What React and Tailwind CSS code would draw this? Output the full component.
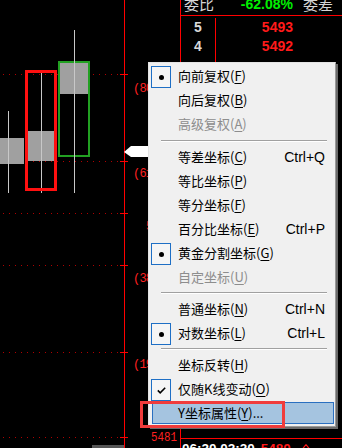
import React from "react";

const GRID = [74, 161, 213, 265, 352, 437];

function Chart() {
  return (
    <svg width="180" height="448" viewBox="0 0 180 448" className="block">
      {GRID.map((y) => (
        <g key={y}>
          <line x1="3" x2="122" y1={y + 0.5} y2={y + 0.5} stroke="#b00000" strokeDasharray="1 5" />
          <line x1="120" x2="128" y1={y + 0.5} y2={y + 0.5} stroke="#ff0000" />
        </g>
      ))}
      <line x1="124.5" x2="124.5" y1="0" y2="448" stroke="#ff0000" />

      {/* left candle */}
      <rect x="0" y="138" width="24" height="26" fill="#a0a0a0" />
      <line x1="8.5" x2="8.5" y1="111" y2="193" stroke="#c8c8c8" />

      {/* middle candle */}
      <rect x="26" y="131" width="31" height="30" fill="#a0a0a0" />
      <line x1="41.5" x2="41.5" y1="71" y2="193" stroke="#c8c8c8" />
      <rect x="26.5" y="71.5" width="29" height="118" fill="none" stroke="#ff1010" strokeWidth="3" />

      {/* right candle */}
      <rect x="58" y="61" width="32" height="33" fill="#a0a0a0" />
      <rect x="59" y="62" width="30" height="94" fill="none" stroke="#22a022" strokeWidth="2" />
      <line x1="74.5" x2="74.5" y1="30" y2="193" stroke="#c8c8c8" />

      <rect x="92" y="445" width="32" height="3" fill="#555555" />

      <g fill="#ff2020" fontFamily="'Liberation Mono', monospace" fontSize="12" letterSpacing="-0.8">
        <text x="133" y="91.5">(80.9%)</text>
        <text x="133" y="177">(61.8%)</text>
        <text x="146" y="230">5490</text>
        <text x="133" y="282">(38.2%)</text>
        <text x="133" y="368">(19.1%)</text>
        <text x="151" y="441" fontSize="13" textLength="26" lengthAdjust="spacingAndGlyphs" letterSpacing="0">5481</text>
      </g>

      <polygon points="124,152 131,146 150,146 150,157 131,157" fill="#ffffff" />
    </svg>
  );
}

const ITEMS = [
  { t: "向前复权", k: "F", check: "dot" },
  { t: "向后复权", k: "B" },
  { t: "高级复权", k: "A", disabled: true },
  { sep: 9 },
  { t: "等差坐标", k: "C", sc: "Ctrl+Q" },
  { t: "等比坐标", k: "P" },
  { t: "等分坐标", k: "F" },
  { t: "百分比坐标", k: "E", sc: "Ctrl+P" },
  { t: "黄金分割坐标", k: "G", check: "dot" },
  { t: "自定坐标", k: "U", disabled: true },
  { sep: 8 },
  { t: "普通坐标", k: "N", sc: "Ctrl+N" },
  { t: "对数坐标", k: "L", sc: "Ctrl+L", check: "dot" },
  { sep: 8 },
  { t: "坐标反转", k: "H" },
  { t: "仅随K线变动", k: "O", check: "tick" },
  { t: "Y坐标属性", k: "Y", suffix: "...", active: true },
];

function CheckBox({ kind }) {
  return (
    <div className="-ml-[2px] mt-[2px] w-[20px] h-[22px] shrink-0 border border-[#1e6fc5] bg-[#f5f5f5] flex items-center justify-center">
      {kind === "dot" ? (
        <div className="w-[5px] h-[5px] rounded-full bg-black" />
      ) : (
        <svg width="9" height="7" viewBox="0 0 9 7">
          <path d="M0.8 3.4 L3.2 5.8 L8.2 0.8" fill="none" stroke="#000" strokeWidth="1.6" />
        </svg>
      )}
    </div>
  );
}

function Menu() {
  return (
    <div className="absolute left-[148px] top-[62px] w-[188px] bg-[#f0f0f0] border border-t-[#e4e4e4] border-l-[#e4e4e4] border-r-[#9a9a9a] border-b-[#9a9a9a] shadow-[2px_2px_0_0_#6a6a6a] py-[1px] font-['Noto_Sans_CJK_SC',sans-serif] text-[13px] leading-[16px]">
      {ITEMS.map((it, i) => {
        if (it.sep) {
          return (
            <div key={i} className={it.sep === 9 ? "h-[9px] flex flex-col justify-center pl-[12px] pr-[8px]" : "h-[8px] flex flex-col justify-center pl-[12px] pr-[8px]"}>
              <div className="h-[1px] bg-[#a0a0a0]" />
              <div className="h-[1px] bg-[#ffffff]" />
            </div>
          );
        }
        return (
          <div key={i} className="h-[24px] py-[1px] pl-[3px] pr-[1px]">
            <div
              className={
                it.active
                  ? "h-full flex items-center border border-[#2a6fc0] bg-[#a5c4e0] text-black"
                  : it.disabled
                  ? "h-full flex items-center border border-transparent text-[#8d8d8d]"
                  : "h-full flex items-center border border-transparent text-black"
              }
            >
              {it.check ? <CheckBox kind={it.check} /> : <div className="-ml-[2px] w-[20px] shrink-0" />}
              <span className="ml-[7px] whitespace-nowrap">
                {it.t}(<span className="underline underline-offset-2">{it.k}</span>){it.suffix || ""}
              </span>
              {it.sc ? (
                <span className="ml-auto mr-[8px] font-['Liberation_Sans',sans-serif] text-[14px] whitespace-nowrap">{it.sc}</span>
              ) : null}
            </div>
          </div>
        );
      })}
    </div>
  );
}

function RightPanel() {
  return (
    <div className="flex-1 h-full flex flex-col border-l border-[#ff0000]">
      <div className="h-[16px] border-b border-[#ff0000] flex overflow-hidden">
        <div className="w-[35px] shrink-0 pl-[3px] -mt-[4px] font-['Noto_Sans_CJK_SC',sans-serif] text-[15px] leading-[15px] text-[#d4d4d4] whitespace-nowrap">委比</div>
        <div className="w-[77px] shrink-0 text-right -mt-[3px] font-['Liberation_Sans',sans-serif] font-bold text-[14px] leading-[15px] text-[#00f000]">-62.08%</div>
        <div className="ml-[10px] -mt-[4px] font-['Noto_Sans_CJK_SC',sans-serif] text-[15px] leading-[15px] text-[#d4d4d4] whitespace-nowrap">委差</div>
      </div>
      <div className="pt-[2px] font-['Liberation_Sans',sans-serif] font-bold text-[14px] leading-[19px]">
        <div className="h-[19px] flex">
          <div className="w-[35px] shrink-0 border-r border-[#ff0000] text-center text-[#d8d8d8]">5</div>
          <div className="w-[77px] shrink-0 text-right text-[#ff1a1a]">5493</div>
        </div>
        <div className="h-[19px] flex">
          <div className="w-[35px] shrink-0 border-r border-[#ff0000] text-center text-[#d8d8d8]">4</div>
          <div className="w-[77px] shrink-0 text-right text-[#ff1a1a]">5492</div>
        </div>
        <div className="h-[20px] flex">
          <div className="w-[35px] shrink-0 border-r border-[#ff0000]" />
        </div>
      </div>
      <div className="flex-1" />
      <div className="h-[10px] border-t border-[#ff0000] flex pt-[2px] pl-[1px] font-['Liberation_Sans',sans-serif] font-bold text-[13.5px] leading-[16px] whitespace-nowrap">
        <span className="text-white">06:20 02:20</span>
        <span className="ml-[6px] text-[#ff1a1a]">5480</span>
        <svg width="8" height="10" viewBox="0 0 8 10" className="ml-[11px] mt-[3px] shrink-0">
          <path d="M4 0.5 L7.5 5 L5.5 5 L5.5 10 M4 0.5 L0.5 5 L2.5 5 L2.5 10" fill="none" stroke="#ff1a1a" strokeWidth="1.2" />
        </svg>
      </div>
    </div>
  );
}

export default function App() {
  return (
    <div className="relative w-[342px] h-[448px] bg-black overflow-hidden flex">
      <div className="w-[180px] h-full shrink-0">
        <Chart />
      </div>
      <RightPanel />
      <Menu />
      <div className="absolute left-[140px] top-[401px] w-[145px] h-[27px] border-[3px] border-[#f03c3c]" />
    </div>
  );
}
